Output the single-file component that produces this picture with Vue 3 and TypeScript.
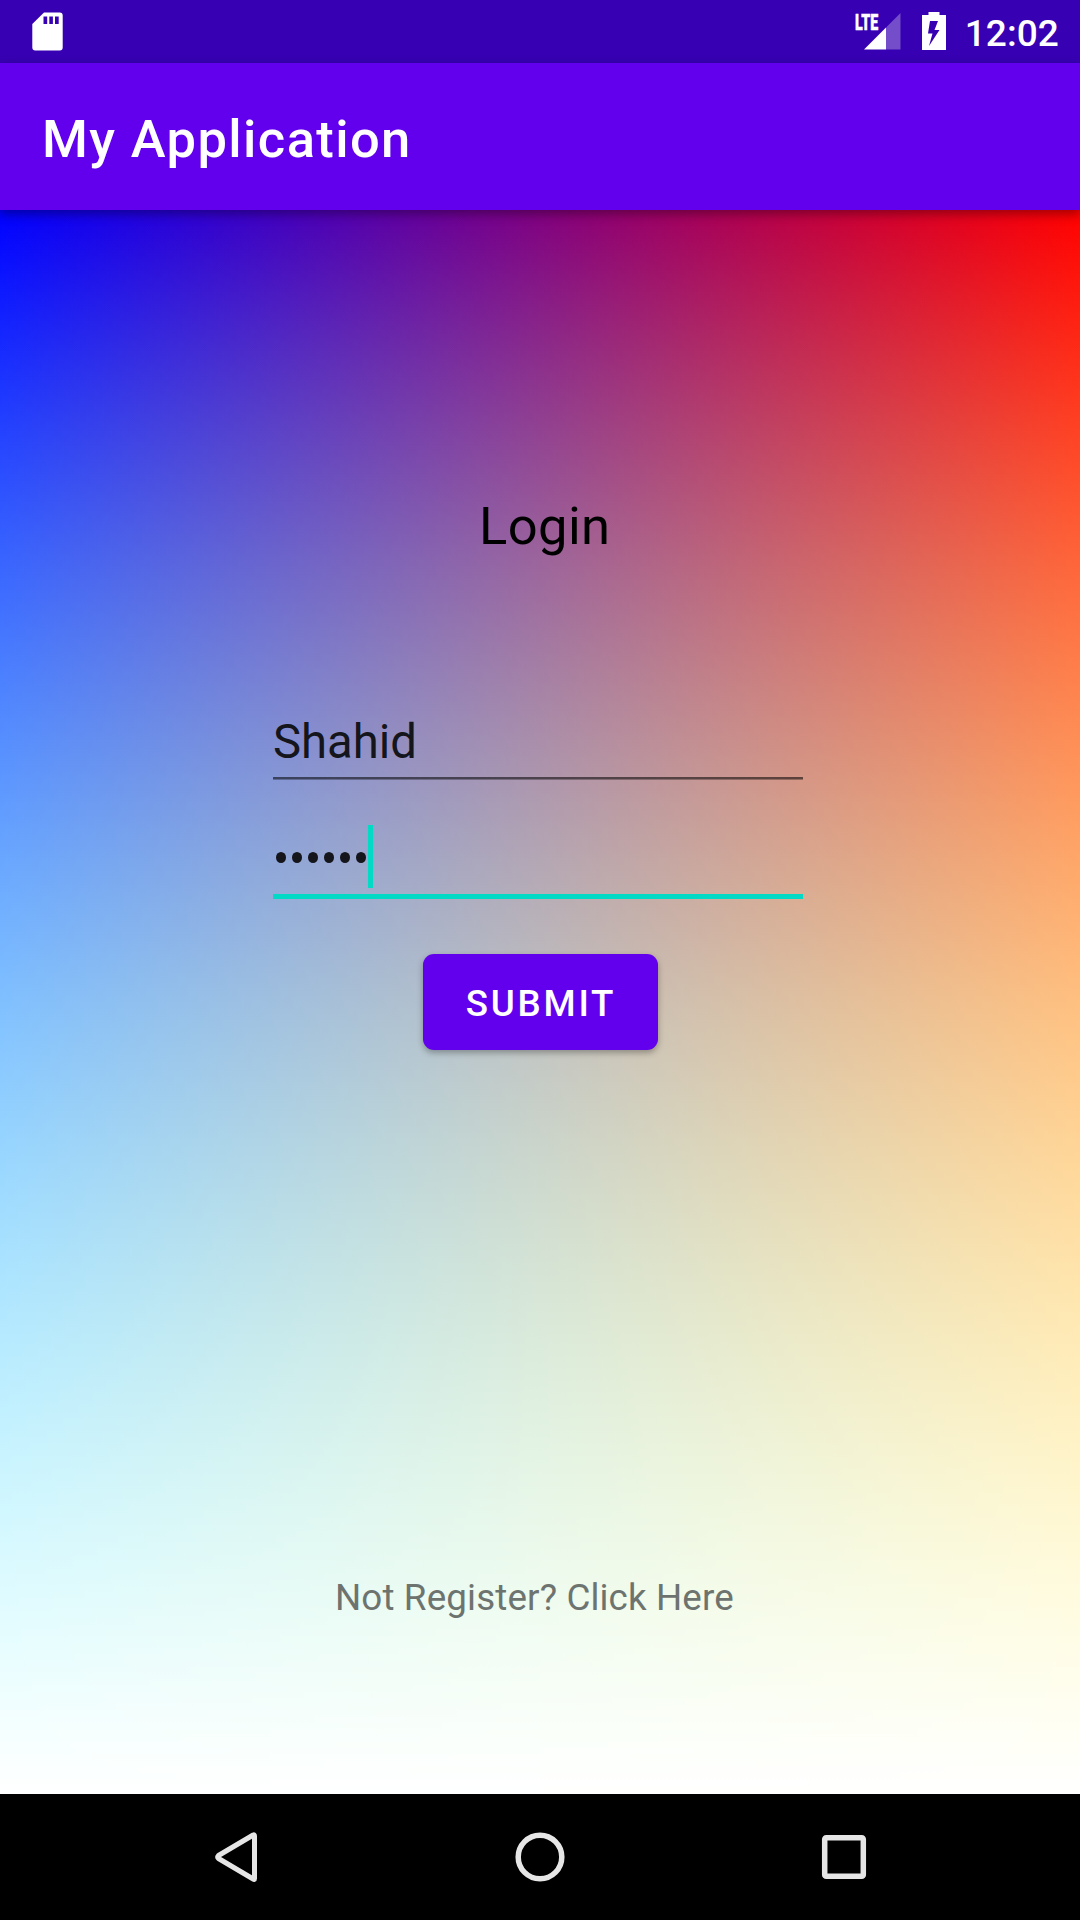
<script setup lang="ts">
import { ref } from 'vue'

const username = ref('Shahid')
const passwordLength = 6
</script>

<template>
  <main class="phone">
    <header class="status">
      <svg class="sd" width="31" height="39" viewBox="0 0 31 39">
        <path fill="#fff" fill-rule="evenodd" d="M12 .5H27.700Q30.700 .5 30.700 3.500V35.500Q30.700 38.500 27.700 38.500H3.300Q.3 38.500 .3 35.500V12ZM11.500 4.500V12H15.200V4.500ZM17.300 4.500V12H20.900V4.500ZM23 4.500V12H26.700V4.500Z" />
      </svg>
      <div class="indicators">
        <div class="signal">
          <svg width="46" height="38" viewBox="0 0 46 38">
            <path fill="#fff" opacity=".3" d="M45.500 0V36.500H31V14.500Z" />
            <path fill="#fff" d="M9 36.500 31 14.500V36.500Z" />
          </svg>
          <span class="lte">LTE</span>
        </div>
        <svg class="battery" width="24" height="38" viewBox="0 0 24 38">
          <path fill="#fff" fill-rule="evenodd" d="M6.500 0H17.500V3H24V38H0V3H6.500ZM8 9 6 21.500H10.500L7 34 17.500 18H12.500L16 9Z" />
        </svg>
        <span class="clock">12:02</span>
      </div>
    </header>
    <div class="appbar"><h1>My Application</h1></div>
    <section class="content">
      <h2>Login</h2>
      <div class="field name">{{ username }}</div>
      <div class="field password">
        <span class="dots"><i v-for="n in passwordLength" :key="n"></i></span>
        <span class="caret"></span>
      </div>
      <button class="submit">SUBMIT</button>
      <p class="register">Not Register? Click Here</p>
    </section>
    <nav class="navbar">
      <svg width="740" height="126" viewBox="0 0 740 126" fill="none" stroke="#e6e6e6" stroke-width="5.5">
        <path stroke-width="5" stroke-linejoin="round" d="M74.500 42V84.500Q74.500 86 73.200 85L38.500 64.500Q37 63 38.500 61.500L73.200 41Q74.500 40.500 74.500 42Z" />
        <circle cx="360" cy="63" r="21.800" />
        <rect x="644.700" y="43.700" width="38.600" height="38.600" rx="1.500" />
      </svg>
    </nav>
  </main>
</template>

<style>
body { margin: 0; }
</style>

<style scoped>
.phone {
  width: 1080px;
  height: 1920px;
  overflow: hidden;
  display: flex;
  flex-direction: column;
  font-family: Roboto, sans-serif;
}
.status {
  height: 63px;
  flex: none;
  background: #3700b3;
  box-sizing: border-box;
  display: flex;
  justify-content: space-between;
  padding: 12px 21px 0 32px;
  color: #fff;
}
.indicators { display: flex; }
.signal { position: relative; width: 46px; height: 38px; margin: 1px 21px 0 0; }
.signal svg { display: block; }
.lte {
  position: absolute;
  left: 0;
  top: -1px;
  font-size: 22.500px;
  line-height: 20px;
  font-weight: 900;
  -webkit-text-stroke: .5px #fff;
  transform: scaleX(.63);
  transform-origin: left;
}
.battery { margin-right: 19px; }
.clock { font-size: 37px; line-height: 44px; font-weight: 500; letter-spacing: .1px; }
.appbar {
  height: 147px;
  flex: none;
  background: #6200ee;
  box-shadow: 0 4px 10px rgba(0, 0, 0, .35);
  position: relative;
  display: flex;
  align-items: center;
  padding-left: 42px;
}
h1 { margin: 4px 0 0; color: #fff; font-size: 52.500px; line-height: 62px; font-weight: 500; letter-spacing: 1.380px; }
.content {
  height: 1584px;
  flex: none;
  display: flex;
  flex-direction: column;
  background:
    linear-gradient(to right, #00f, #f00),
    linear-gradient(to bottom, #000, #0f0),
    linear-gradient(to bottom, #000, #fff);
  background-blend-mode: screen;
}
h2 { margin: 285px 0 0 479px; font-size: 52.500px; line-height: 62px; font-weight: 400; letter-spacing: .4px; color: #000; }
.field { width: 530px; margin-left: 273px; box-sizing: border-box; color: #15151c; }
.name {
  height: 69px;
  margin-top: 153px;
  font-size: 47.250px;
  line-height: 65px;
  border-bottom: 2px solid rgba(0, 0, 0, .56);
  box-shadow: 0 1px rgba(0, 0, 0, .3);
}
.password {
  height: 74px;
  margin-top: 46px;
  border-bottom: 5px solid #03dac5;
  display: flex;
  align-items: flex-start;
}
.dots { display: flex; gap: 6px; margin: 27px 2px 0 3px; }
.dots i { width: 10px; height: 11px; border-radius: 50%; background: #15151c; }
.caret { width: 5px; height: 63px; background: #03dac5; }
.submit {
  width: 235px;
  height: 96px;
  margin: 55px 0 0 423px;
  border: 0;
  border-radius: 11px;
  background: #6200ee;
  box-shadow: 0 3px 6px rgba(0, 0, 0, .3);
  color: #fff;
  font: 500 36.750px/44px Roboto, sans-serif;
  letter-spacing: 2.750px;
  padding: 3px 0 0 1px;
}
.register { margin: 526px 0 0 335px; font-size: 36.750px; line-height: 44px; letter-spacing: .14px; color: #6d746f; }
.navbar { height: 126px; background: #000; display: flex; padding-left: 180px; }
</style>
